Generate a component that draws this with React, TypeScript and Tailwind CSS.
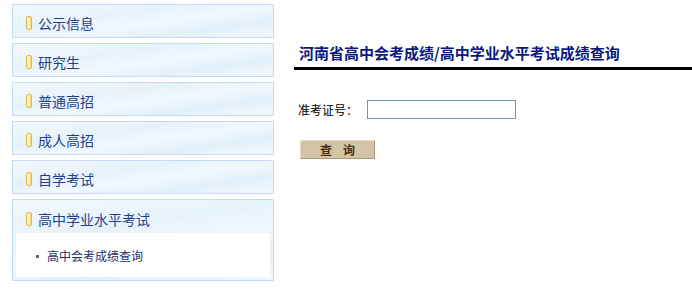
import React from "react";

const items = ["公示信息", "研究生", "普通高招", "成人高招", "自学考试"];

const boxBg =
  "bg-[linear-gradient(172deg,#f3f9fd_0%,#e6f2fb_35%,#f1f8fd_55%,#e3f0fa_75%,#f2f8fd_100%)]";

function Pill() {
  return (
    <span className="inline-block w-[6px] h-[14px] rounded-[2px] border border-[#e2b84a] bg-[linear-gradient(90deg,#fbe9a0,#fff8d6_50%,#f4d26a)] mr-[6px] shrink-0" />
  );
}

export default function App() {
  return (
    <div
      className="flex w-[692px] h-[297px] bg-white"
      style={{ fontFamily: '"Noto Sans CJK SC", "Noto Sans", sans-serif' }}
    >
      <div className="ml-[12px] mt-[4px] w-[262px] flex flex-col gap-[5px]">
        {items.map((t) => (
          <div
            key={t}
            className={`h-[34px] border border-[#c6dbf6] ${boxBg} flex items-center pl-[13px] pt-[3px]`}
          >
            <Pill />
            <span className="text-[14px] leading-none text-[#1d3f8c]">{t}</span>
          </div>
        ))}
        <div className={`h-[82px] border border-[#c6dbf6] ${boxBg} flex flex-col`}>
          <div className="h-[33px] flex items-center pl-[13px] pt-[5px]">
            <Pill />
            <span className="text-[14px] leading-none text-[#1d3f8c]">高中学业水平考试</span>
          </div>
          <div className="mx-[3px] mb-[3px] flex-1 bg-white flex items-center pl-[20px] pt-[2px]">
            <span className="w-[3px] h-[3px] bg-[#666] mr-[8px]" />
            <span className="text-[12px] leading-none text-[#1d3070]">高中会考成绩查询</span>
          </div>
        </div>
      </div>

      <div className="ml-[20px] flex-1 flex flex-col">
        <div className="mt-[45px] pl-[5px] h-[25px] text-[15px] leading-[16px] font-bold text-[#0c1a80] border-b-[3px] border-black">
          河南省高中会考成绩/高中学业水平考试成绩查询
        </div>
        <div className="mt-[30px] flex items-center pl-[4px]">
          <span className="text-[12px] leading-none text-black w-[69px]">准考证号：</span>
          <input
            type="text"
            className="w-[149px] h-[19px] border border-[#6a9db5] outline-none bg-white"
          />
        </div>
        <div className="mt-[21px] pl-[6px]">
          <button className="w-[75px] h-[19px] bg-[#d3c4a6] border border-[#e6dac4] border-b-[#a8987a] border-r-[#a8987a] text-[12px] leading-none font-bold text-[#4a2e10] flex items-center justify-center tracking-[0.9em] pl-[0.9em]">
            查询
          </button>
        </div>
      </div>
    </div>
  );
}
